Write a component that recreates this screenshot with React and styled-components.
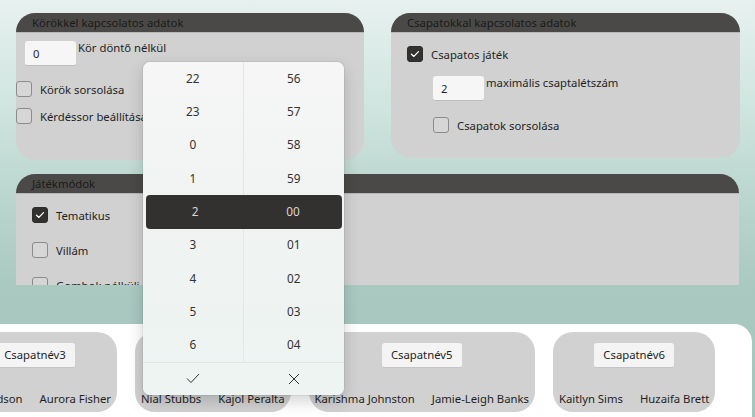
import React from "react";
import styled, { createGlobalStyle } from "styled-components";

const Global = createGlobalStyle`
  html, body { margin: 0; padding: 0; }
  body { font-family: "Noto Sans", "Open Sans", sans-serif; font-size: 11.3px; color: #1f1f1f; overflow: hidden; }
  * { box-sizing: border-box; }
`;

const Window = styled.div`
  position: relative;
  width: 755px;
  height: 417px;
  overflow: hidden;
  display: flex;
  flex-direction: column;
  background: linear-gradient(180deg, #e7f1ef 0%, #d0e5df 25%, #bcd8d0 45%, #aac9c1 68%, #a4c4bc 100%);
`;

const Scroll = styled.div`
  height: 285px;
  flex: none;
  overflow: hidden;
  padding: 13px 16px 0 16px;
  display: flex;
  flex-direction: column;
  gap: 14px;
`;

const TopRow = styled.div`
  display: grid;
  grid-template-columns: 348px 349px;
  column-gap: 27px;
  align-items: start;
`;

const Panel = styled.section`
  display: flex;
  flex-direction: column;
  width: ${(p) => p.$w || "auto"};
`;

const Header = styled.div`
  height: 19px;
  line-height: 19px;
  padding-left: 16px;
  background: #4b4947;
  color: #1a1a1a;
  border-radius: 20px 20px 0 0;
  box-shadow: 0 1px 0 #b8b8b8;
  position: relative;
  z-index: 1;
`;

const Body = styled.div`
  background: #d1d1d1;
  height: ${(p) => p.$h}px;
  border-radius: ${(p) => (p.$clipped ? "0 0 3px 3px" : "0 0 20px 20px")};
  padding: ${(p) => p.$pad};
  display: flex;
  flex-direction: column;
  align-items: flex-start;
`;

const Field = styled.div`
  display: flex;
  align-items: flex-start;
  margin: ${(p) => p.$m || "0"};
`;

const NumBox = styled.div`
  width: 51px;
  height: 25px;
  background: #f6f6f6;
  border-radius: 3px;
  border-bottom: 1px solid #bdbdbd;
  padding-left: 8px;
  line-height: 25px;
  font-size: 11.3px;
  color: #1f1f1f;
`;

const FieldLabel = styled.span`
  margin-left: 2px;
  line-height: 15px;
  margin-top: -1px;
`;

const CheckRow = styled.label`
  display: flex;
  align-items: center;
  gap: 8px;
  height: 16px;
  margin: ${(p) => p.$m || "0"};
  white-space: nowrap;
`;

const Box = styled.span`
  width: 16px;
  height: 16px;
  flex: none;
  border-radius: 3px;
  border: 1px solid ${(p) => (p.$on ? "#2f2d2c" : "#8c8c8c")};
  background: ${(p) => (p.$on ? "#33312f" : "#d6d6d6")};
  display: flex;
  align-items: center;
  justify-content: center;
`;

const Check = ({ on, label, m }) => (
  <CheckRow $m={m}>
    <Box $on={on}>
      {on && (
        <svg width="10" height="8" viewBox="0 0 10 8">
          <path d="M1.5 4.2 L3.9 6.4 L8.5 1.6" fill="none" stroke="#fff" strokeWidth="1.3" strokeLinecap="round" strokeLinejoin="round" />
        </svg>
      )}
    </Box>
    <span>{label}</span>
  </CheckRow>
);

const Bottom = styled.div`
  margin-top: 39px;
  flex: 1;
  width: 752px;
  background: #ffffff;
  border-top-right-radius: 18px;
  padding-top: 8px;
  overflow: hidden;
`;

const Cards = styled.div`
  display: flex;
  gap: 18px;
  margin-left: -47px;
`;

const Card = styled.div`
  flex: none;
  height: 80px;
  background: #d1d1d1;
  border-radius: 20px;
  padding: 11px 6px 0 6px;
  display: flex;
  flex-direction: column;
  align-items: center;
`;

const TeamName = styled.div`
  height: 25px;
  line-height: 24px;
  padding: 0 9px;
  background: #f4f4f4;
  border-radius: 3px;
  border-bottom: 1px solid #c4c4c4;
`;

const Members = styled.div`
  margin-top: 23px;
  display: flex;
  gap: 17px;
  white-space: nowrap;
`;

const Picker = styled.div`
  position: absolute;
  left: 143px;
  top: 62px;
  width: 201px;
  height: 333px;
  border-radius: 7px;
  background: linear-gradient(180deg, #f6f6f6 0%, #f0f3f2 50%, #edf4f2 100%);
  box-shadow: 0 6px 16px rgba(0, 0, 0, 0.18), 0 0 0 1px rgba(0, 0, 0, 0.05);
  display: flex;
  flex-direction: column;
  overflow: hidden;
  z-index: 5;
`;

const PRow = styled.div`
  height: 33.33px;
  display: grid;
  grid-template-columns: 1fr 1fr;
  margin: ${(p) => (p.$sel ? "0 2px 0 3px" : "0")};
  background: ${(p) => (p.$sel ? "#33312f" : "transparent")};
  border-radius: ${(p) => (p.$sel ? "4px" : "0")};
  color: ${(p) => (p.$sel ? "#d6d6d6" : "#333")};
  font-size: 11.8px;
`;

const PCell = styled.div`
  display: flex;
  align-items: center;
  justify-content: center;
  padding-bottom: 2px;
  border-right: ${(p) => (p.$div ? "1px solid #e4e6e5" : "none")};
`;

const PFooter = styled.div`
  height: 33px;
  border-top: 1px solid #e2e4e3;
  display: grid;
  grid-template-columns: 1fr 1fr;
`;

const PBtn = styled.div`
  display: flex;
  align-items: center;
  justify-content: center;
`;

const hours = ["22", "23", "0", "1", "2", "3", "4", "5", "6"];
const mins = ["56", "57", "58", "59", "00", "01", "02", "03", "04"];

const teams = [
  { n: "Csapatnév3", a: "Leo Hudson", b: "Aurora Fisher" },
  { n: "Csapatnév4", a: "Nial Stubbs", b: "Kajol Peralta" },
  { n: "Csapatnév5", a: "Karishma Johnston", b: "Jamie-Leigh Banks" },
  { n: "Csapatnév6", a: "Kaitlyn Sims", b: "Huzaifa Brett" },
];

export default function App() {
  return (
    <>
      <Global />
      <Window>
        <Scroll>
          <TopRow>
            <Panel>
              <Header>Körökkel kapcsolatos adatok</Header>
              <Body $h={128} $pad="9px 0 0 0">
                <Field $m="0 0 0 9px">
                  <NumBox>0</NumBox>
                  <FieldLabel>Kör döntő nélkül</FieldLabel>
                </Field>
                <Check label="Körök sorsolása" m="15px 0 0 0" />
                <Check label="Kérdéssor beállítása" m="11px 0 0 0" />
              </Body>
            </Panel>
            <Panel>
              <Header>Csapatokkal kapcsolatos adatok</Header>
              <Body $h={126} $pad="14px 0 0 16px">
                <Check on label="Csapatos játék" />
                <Field $m="14px 0 0 26px">
                  <NumBox>2</NumBox>
                  <FieldLabel>maximális csaptalétszám</FieldLabel>
                </Field>
                <Check label="Csapatok sorsolása" m="16px 0 0 26px" />
              </Body>
            </Panel>
          </TopRow>
          <Panel $w="723px">
            <Header>Játékmódok</Header>
            <Body $h={120} $clipped $pad="14px 0 0 16px">
              <Check on label="Tematikus" />
              <Check label="Villám" m="19px 0 0 0" />
              <Check label="Gombok nélküli játék" m="19px 0 0 0" />
            </Body>
          </Panel>
        </Scroll>
        <Bottom>
          <Cards>
            {teams.map((t) => (
              <Card key={t.n}>
                <TeamName>{t.n}</TeamName>
                <Members>
                  <span>{t.a}</span>
                  <span>{t.b}</span>
                </Members>
              </Card>
            ))}
          </Cards>
        </Bottom>
        <Picker>
          {hours.map((h, i) => (
            <PRow key={h} $sel={i === 4}>
              <PCell $div={i !== 4}>{h}</PCell>
              <PCell>{mins[i]}</PCell>
            </PRow>
          ))}
          <PFooter>
            <PBtn>
              <svg width="14" height="11" viewBox="0 0 14 11">
                <path d="M1 5.5 L5 9.5 L13 1" fill="none" stroke="#333" strokeWidth="1" />
              </svg>
            </PBtn>
            <PBtn>
              <svg width="12" height="12" viewBox="0 0 12 12">
                <path d="M1 1 L11 11 M11 1 L1 11" fill="none" stroke="#333" strokeWidth="1" />
              </svg>
            </PBtn>
          </PFooter>
        </Picker>
      </Window>
    </>
  );
}
